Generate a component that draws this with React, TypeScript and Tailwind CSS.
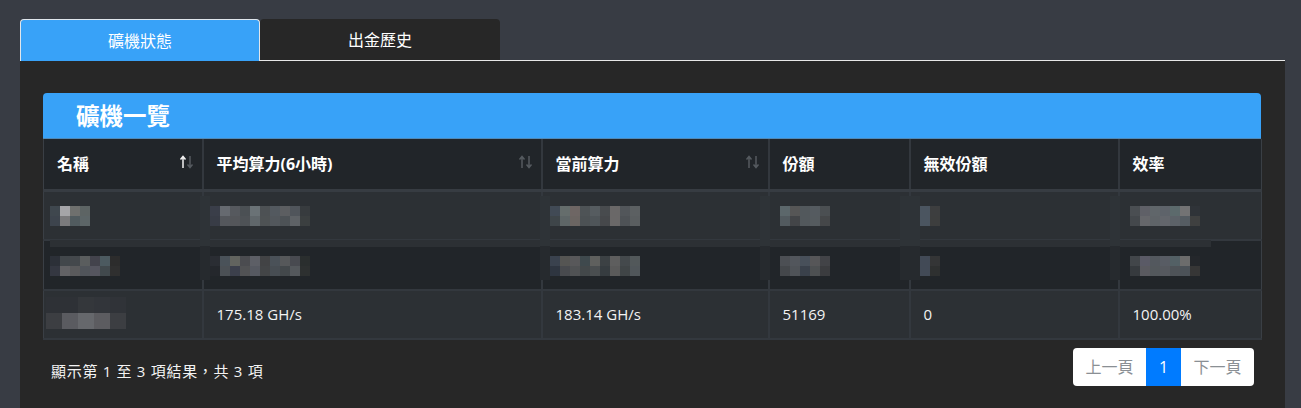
const font = { fontFamily: '"Open Sans", "Noto Sans CJK TC", sans-serif' };

type MosaicProps = { rows: string[][]; cell?: number };
function Mosaic({ rows, cell = 10 }: MosaicProps) {
  return (
    <svg width={rows[0].length * cell} height={rows.length * cell} className="block" shapeRendering="crispEdges">
      {rows.map((r, y) => r.map((c, x) => <rect key={`${x}-${y}`} x={x * cell} y={y * cell} width={cell} height={cell} fill={c} />))}
    </svg>
  );
}

function Sort({ active = false }: { active?: boolean }) {
  return (
    <svg width="15" height="14" viewBox="0 0 15 14" className="absolute right-[8px] top-[16px]">
      <path d="M4 13V2M1.5 4.5 4 1.5l2.5 3" fill="none" stroke={active ? '#f2f2f2' : '#555a5f'} strokeWidth="1.5" />
      <path d="M11 1v11M8.5 9.5 11 12.5l2.5-3" fill="none" stroke="#555a5f" strokeWidth="1.5" />
    </svg>
  );
}

const m = {
  n1: [['#3f474e', '#a5a5a8', '#6f706e', '#5d6464'], ['#3d444d', '#7a7a7c', '#515b5f', '#5c6567']],
  n2: [['#2c3038', '#42474b', '#44484c', '#5a5d5e', '#43434c', '#4c5a60', '#2c2c2c'], ['#343741', '#626265', '#5a5a5c', '#50545a', '#55555f', '#41494d', '#2f2f2f']],
  a1: [['#3a3e49', '#666a70', '#56595e', '#4b5054', '#6a7276', '#4d5154', '#53595f', '#5c5e61', '#50555b', '#373b3e'], ['#383c46', '#54575c', '#54565a', '#4e5256', '#60676b', '#4e5254', '#52575c', '#4d5256', '#5e6266', '#3b3f40']],
  a2: [['#2a2d33', '#4a5259', '#62645f', '#4b4c50', '#5d5f66', '#424345', '#4a5158', '#56585a', '#484a50', '#2a2e2e'], ['#24272c', '#4b5055', '#3c404c', '#515254', '#565961', '#434547', '#474d53', '#43484b', '#54585c', '#2d3030']],
  b1: [['#414a55', '#656d6c', '#6e6664', '#4e5356', '#565c60', '#484b4e', '#6a6868', '#52565a', '#5c6062'], ['#3e4549', '#5e6667', '#6b6562', '#4c5154', '#4f5559', '#46484b', '#6a6868', '#4e5256', '#5a5e60']],
  b2: [['#3a424e', '#555553', '#58585a', '#3f494d', '#5f605e', '#3c4144', '#5e5e5e', '#44494c', '#52585a'], ['#2e3540', '#484a4e', '#505254', '#43484a', '#4a4e50', '#363c40', '#5a5a5a', '#404547', '#50565a']],
  c1: [['#5c676b', '#565656', '#52585c', '#555b60', '#4b4f52'], ['#525a5f', '#434548', '#52585c', '#555b5f', '#454749']],
  c2: [['#4c4f54', '#52565c', '#48505a', '#565658', '#424347'], ['#44474b', '#4f5358', '#3a414b', '#4d5052', '#3b3c3f']],
  d1: [['#4b5560', '#3d3e3f'], ['#4b5560', '#3d3e3e']],
  d2: [['#424a56', '#343536'], ['#424a56', '#2e3030']],
  e1: [['#4a4e52', '#5f6067', '#60666a', '#5e636a', '#5c6a6c', '#737374', '#2f3338'], ['#44484c', '#66676b', '#5f6468', '#63666c', '#5c6268', '#555c62', '#3f4040']],
  e2: [['#42464a', '#5a5a66', '#53585e', '#585c64', '#536065', '#6c6c6c', '#24272b'], ['#363a3e', '#5a5a60', '#53585c', '#56595f', '#4e5358', '#4c5258', '#363636']],
  n3: [['#2e3136', '#2e3136', '#34373b', '#32353a', '#303338'], ['#3c3e42', '#5a5b60', '#66686c', '#5c5c60', '#3c3e42']],
};

const line = 'border-2 border-[#33383e] first:border-l first:border-l-[#3a3f45] last:border-r last:border-r-[#3a3f45]';
const th = `relative ${line} border-t-0 border-b-[3px] border-b-[#373c42] pl-[13px] pr-3 text-left align-middle text-[16px] font-bold text-white`;
const td = `relative ${line} pl-[13px] pr-3 text-left align-middle text-[15px] font-normal text-[#f3f3f3]`;

const smudges = [
  { x: 157, w: 10 },
  { x: 497, w: 10 },
  { x: 717, w: 10 },
  { x: 857, w: 20 },
  { x: 1067, w: 10 },
];

export default function App() {
  return (
    <div style={font} className="h-[408px] w-[1301px] overflow-hidden bg-[#383c44] pl-5 pr-4 pt-[19px]">
      <div className="flex h-[42px] border-b border-[#e8e8e8]">
        <div className="relative -mb-px flex h-[42px] w-[240px] items-center justify-center rounded-t border border-b-0 border-[#e0e6ec] bg-[#38a2f8] text-[16px] text-white">礦機狀態</div>
        <div className="flex h-[41px] w-[240px] items-center justify-center rounded-t bg-[#272727] text-[16px] text-white">出金歷史</div>
      </div>
      <div className="h-[347px] bg-[#272727] px-[23px] pt-8">
        <div className="relative w-[1218px]">
          <div className="flex h-[46px] items-center rounded-t border-b border-[#4f89b8] bg-[#38a2f8] pl-[33px] pt-[2px] text-[23.5px] font-bold text-white">礦機一覽</div>
          <table className="w-[1218px] table-fixed border-collapse">
            <colgroup>
              <col className="w-[159px]" />
              <col className="w-[339px]" />
              <col className="w-[227px]" />
              <col className="w-[141px]" />
              <col className="w-[209px]" />
              <col className="w-[143px]" />
            </colgroup>
            <thead>
              <tr className="h-[51px] bg-[#212529]">
                <th className={th}>名稱<Sort active /></th>
                <th className={th}>平均算力(6小時)<Sort /></th>
                <th className={th}>當前算力<Sort /></th>
                <th className={th}>份額</th>
                <th className={th}>無效份額</th>
                <th className={th}>效率</th>
              </tr>
            </thead>
            <tbody>
              <tr className="h-[50px] bg-[#2c3034]">
                <td className={td}><div className="-ml-[7px] mt-[1px]"><Mosaic rows={m.n1} /></div></td>
                <td className={td}><div className="-ml-[7px] mt-[1px]"><Mosaic rows={m.a1} /></div></td>
                <td className={td}><div className="-ml-[6px] mt-[1px]"><Mosaic rows={m.b1} /></div></td>
                <td className={td}><div className="-ml-[3px] mt-[1px]"><Mosaic rows={m.c1} /></div></td>
                <td className={td}><div className="-ml-[4px] mt-[1px]"><Mosaic rows={m.d1} /></div></td>
                <td className={td}><div className="-ml-[3px] mt-[1px]"><Mosaic rows={m.e1} /></div></td>
              </tr>
              <tr className="h-[50px] bg-[#212529]">
                <td className={td}><div className="-ml-[7px] mt-[1px]"><Mosaic rows={m.n2} /></div></td>
                <td className={td}><div className="-ml-[7px] mt-[1px]"><Mosaic rows={m.a2} /></div></td>
                <td className={td}><div className="-ml-[6px] mt-[1px]"><Mosaic rows={m.b2} /></div></td>
                <td className={td}><div className="-ml-[3px] mt-[1px]"><Mosaic rows={m.c2} /></div></td>
                <td className={td}><div className="-ml-[4px] mt-[1px]"><Mosaic rows={m.d2} /></div></td>
                <td className={td}><div className="-ml-[3px] mt-[1px]"><Mosaic rows={m.e2} /></div></td>
              </tr>
              <tr className="h-[49px] bg-[#2c3034]">
                <td className={td}><div className="-ml-[11px] -mt-[4px]"><Mosaic rows={m.n3} cell={16} /></div></td>
                <td className={td}>175.18 GH/s</td>
                <td className={td}>183.14 GH/s</td>
                <td className={td}>51169</td>
                <td className={td}>0</td>
                <td className={td}>100.00%</td>
              </tr>
            </tbody>
          </table>
          <div className="mt-[8px] flex items-start justify-between pl-2 pr-[7px]">
            <div className="pt-[12px] text-[15px] tracking-[0.7px] text-[#f3f3f3]">顯示第 1 至 3 項結果，共 3 項</div>
            <div className="flex h-[38px] overflow-hidden rounded bg-white text-[16px] text-[#8a8f94]">
              <div className="flex w-[73px] items-center justify-center">上一頁</div>
              <div className="flex w-[35px] items-center justify-center bg-[#007bff] text-white">1</div>
              <div className="flex w-[73px] items-center justify-center">下一頁</div>
            </div>
          </div>
          <div className="absolute left-[7px] top-[147px] h-[7px] w-[1161px] bg-[#2c3034]" />
          {smudges.map((s) => (
            <div key={s.x} className="absolute top-[103px] h-[84px]" style={{ left: s.x, width: s.w }}>
              <div className="h-[50px] bg-[#2e3337]" />
              <div className="h-[34px] bg-[#262a2e]" />
            </div>
          ))}
        </div>
      </div>
    </div>
  );
}
